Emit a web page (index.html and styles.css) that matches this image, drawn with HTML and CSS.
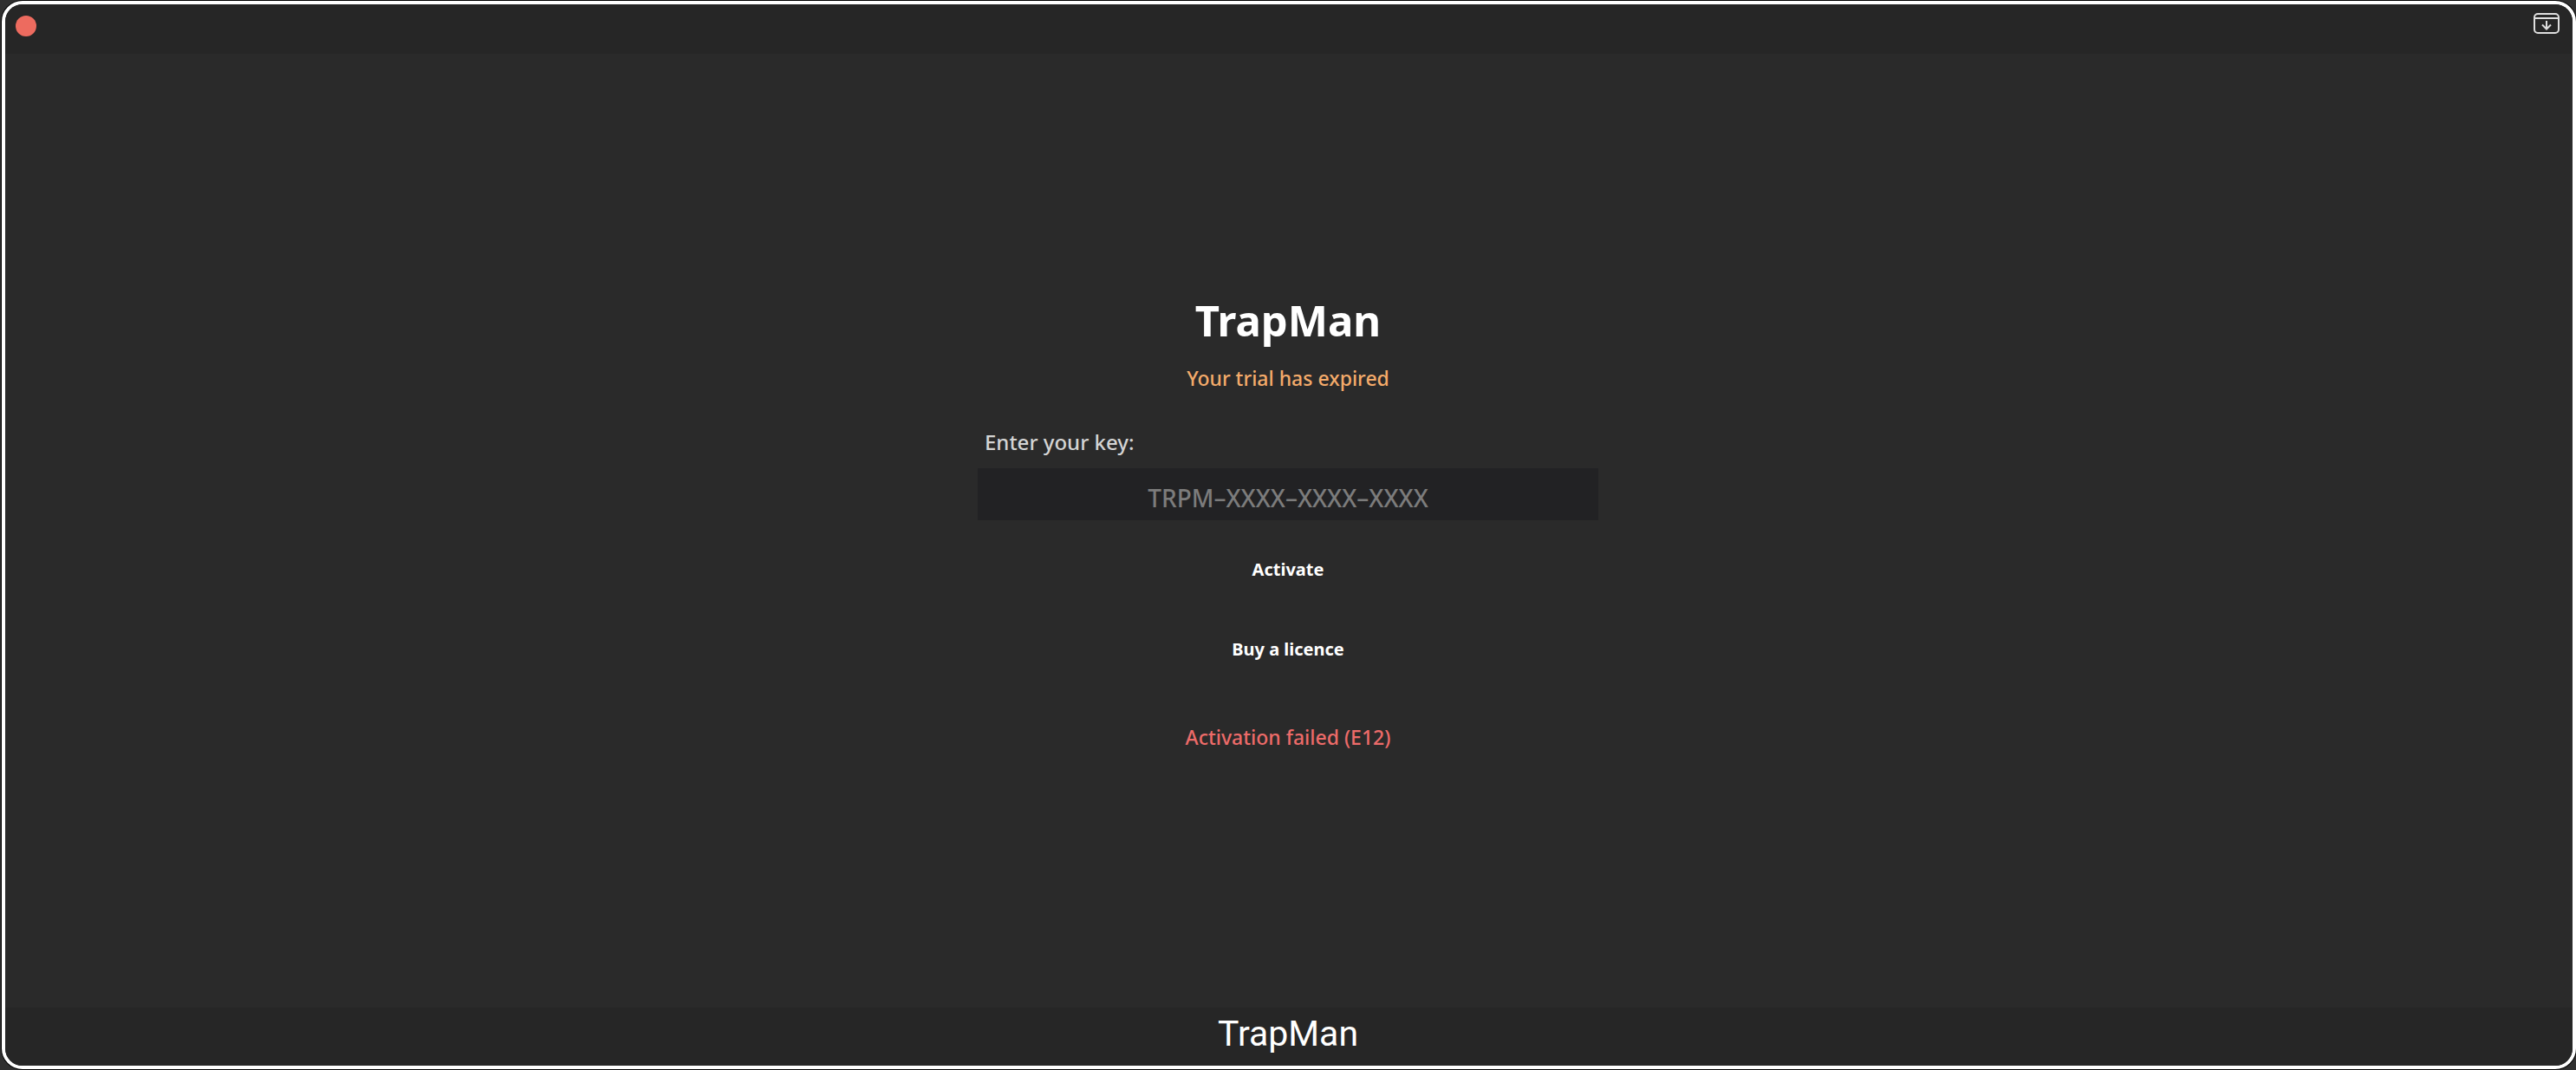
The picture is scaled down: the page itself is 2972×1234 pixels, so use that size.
FILE: index.html
```html
<!DOCTYPE html>
<html lang="en">
  <head>
    <meta charset="UTF-8" />
    <meta name="viewport" content="width=device-width, initial-scale=1.0" />
    <title>TrapMan</title>
    <link rel="stylesheet" href="styles.css">
  </head>

  <body>
    <div class="window">
      <header class="topbar">
        <button class="close" type="button" aria-label="Close"></button>
        <button class="dock" type="button" aria-label="Minimise">
          <svg width="30" height="24" viewBox="0 0 30 24" fill="none" stroke="#dedede" stroke-width="2">
            <rect x="1" y="1" width="28" height="22" rx="4" />
            <path d="M1 6H29" />
            <path d="M15 9V18M10 13.500L15 18.500L20 13.500" />
          </svg>
        </button>
      </header>

      <main class="content">
        <form class="licence">
          <h1>TrapMan</h1>
          <p class="trial">Your trial has expired</p>
          <label for="key">Enter your key:</label>
          <input id="key" type="text" placeholder="TRPM–XXXX–XXXX–XXXX" />
          <button class="knap" type="button">Activate</button>
          <button class="knap" type="button">Buy a licence</button>
          <p class="error">Activation failed (E12)</p>
        </form>
      </main>

      <footer class="bottombar">TrapMan</footer>
    </div>
  </body>
</html>
```
FILE: styles.css
```css
* {
  box-sizing: border-box;
}

body {
  margin: 0;
  height: 100vh;
  padding: 1px 0 1px 2px;
  background-color: #303030;
  font-family: "Noto Sans", "Open Sans", sans-serif;
  color: white;
}

.window {
  height: 100%;
  display: flex;
  flex-direction: column;
  border: 4px solid white;
  border-radius: 24px;
  background-color: #2a2a2a;
  box-shadow: 0 0 0 1px black;
  overflow: hidden;
}

.topbar {
  height: 57px;
  display: flex;
  justify-content: space-between;
  align-items: flex-start;
  padding: 10px 15px 0 12px;
  background-color: #262626;
}

button {
  border: none;
  padding: 0;
  background: none;
  color: white;
  font-family: inherit;
  cursor: pointer;
}

.close {
  width: 24px;
  height: 24px;
  margin-top: 3px;
  border-radius: 50%;
  background-color: #ed6b5f;
}

.dock {
  height: 24px;
}

.dock svg {
  display: block;
}

.content {
  flex: 1;
  display: flex;
  justify-content: center;
  align-items: center;
  padding: 0 2px 22px 0;
}

.licence {
  width: 716px;
  max-width: 100%;
  display: flex;
  flex-direction: column;
  text-align: center;
}

h1 {
  margin: 0 0 19px;
  font-size: 49px;
  line-height: 64px;
}

p {
  margin: 0;
  font-size: 23px;
  font-weight: 500;
  line-height: 32px;
}

.trial {
  margin-bottom: 42px;
  color: #f4ab6a;
}

label {
  margin-bottom: 14px;
  padding-left: 8px;
  text-align: left;
  font-size: 24px;
  font-weight: 500;
  line-height: 32px;
  color: #d4d4d4;
}

input {
  width: 100%;
  height: 60px;
  margin-bottom: 27px;
  padding: 8px 8px 0;
  border: none;
  background-color: #222224;
  color: #d4d4d4;
  font-family: inherit;
  font-size: 28px;
  font-weight: 500;
  text-align: center;
}

input::placeholder {
  color: #7c7c7c;
  opacity: 1;
}

.knap {
  height: 60px;
  margin-bottom: 32px;
  font-size: 20px;
  font-weight: bold;
}

.error {
  margin-top: 23px;
  color: #ed6b69;
}

.bottombar {
  height: 67px;
  padding-right: 2px;
  background-color: #262626;
  font-family: Roboto, sans-serif;
  font-size: 41px;
  line-height: 60px;
  text-align: center;
}
```
